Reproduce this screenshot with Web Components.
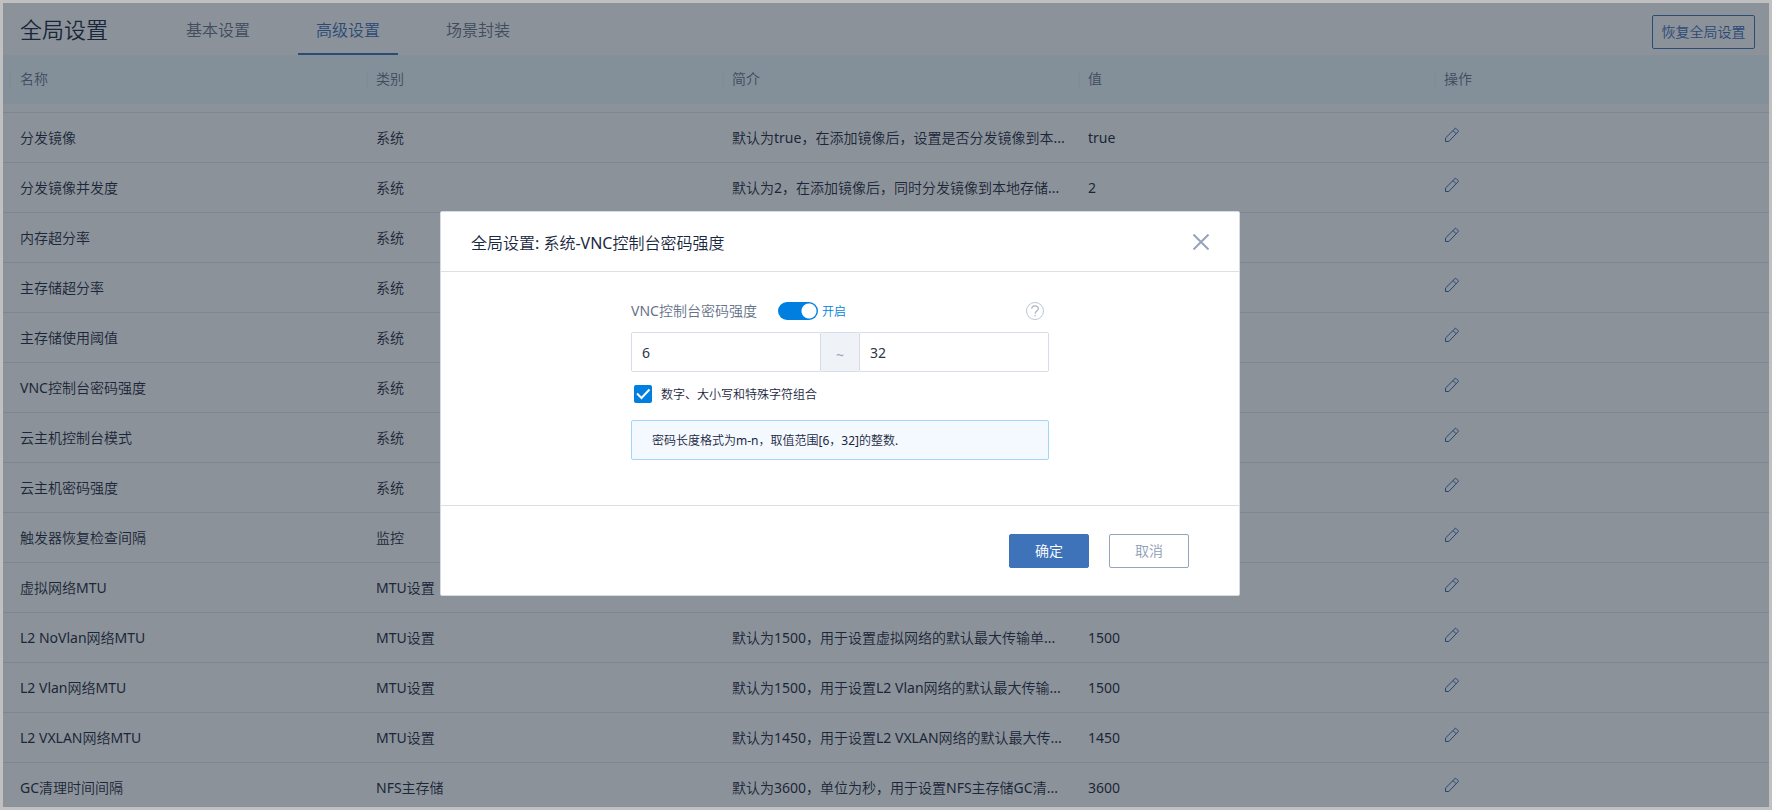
<!DOCTYPE html>
<html lang="zh-CN">
<head>
<meta charset="utf-8">
<title>全局设置</title>
<style>
  body {
    margin: 0;
    background: #c0c0c0;
    font-family: "Noto Sans", "Noto Sans CJK SC DemiLight", "Noto Sans CJK SC", sans-serif;
    font-size: 14px;
    font-weight: 400;
    line-height: 20px;
    color: #1a2740;
  }
</style>
</head>
<body>
<settings-page>
  <page-header slot="header" heading="全局设置">
    <nav-tab>基本设置</nav-tab>
    <nav-tab active>高级设置</nav-tab>
    <nav-tab>场景封装</nav-tab>
    <ui-button slot="action" kind="outline">恢复全局设置</ui-button>
  </page-header>
  <settings-table></settings-table>
  <modal-dialog slot="modal" heading="全局设置: 系统-VNC控制台密码强度">
    <password-form></password-form>
    <ui-button slot="footer" kind="primary">确定</ui-button>
    <ui-button slot="footer" kind="muted">取消</ui-button>
  </modal-dialog>
</settings-page>

<script>
class BaseElement extends HTMLElement {
  connectedCallback() {
    if (!this.shadowRoot) this.attachShadow({ mode: 'open' }).innerHTML = this.render();
  }
}

customElements.define('settings-page', class extends BaseElement {
  render() {
    return `<style>
      :host { display: flex; flex-direction: column; position: relative; box-sizing: border-box;
        height: 100vh; border: 3px solid #c0c0c0; background: #fff; overflow: hidden; }
      main { flex: 1; min-height: 0; overflow: hidden; }
      .mask { position: absolute; inset: 0; background: rgba(25, 37, 51, .5);
        display: flex; justify-content: center; align-items: flex-start;
        padding: 208px 92px 0 0; }
    </style>
    <slot name="header"></slot>
    <main><slot></slot></main>
    <div class="mask"><slot name="modal"></slot></div>`;
  }
});

customElements.define('page-header', class extends BaseElement {
  render() {
    return `<style>
      :host { display: flex; align-items: center; flex: none; height: 52px; padding: 0 14px 0 17px; }
      h1 { margin: 0; width: 148px; font-size: 22px; line-height: 32px; font-weight: inherit; }
      nav { display: flex; gap: 30px; flex: 1; }
      .action { padding-top: 6px; }
    </style>
    <h1>${this.getAttribute('heading')}</h1>
    <nav><slot></slot></nav>
    <div class="action"><slot name="action"></slot></div>`;
  }
});

customElements.define('nav-tab', class extends BaseElement {
  render() {
    return `<style>
      :host { display: block; width: 100px; }
      a { display: block; box-sizing: border-box; height: 52px; padding-top: 4px; line-height: 46px; text-align: center;
        font-size: 16px; color: #66728a; text-decoration: none; border-bottom: 2px solid transparent; }
      :host([active]) a { color: #3a6eb7; border-color: #3e73ba; }
    </style>
    <a href="#"><slot></slot></a>`;
  }
});

customElements.define('ui-button', class extends BaseElement {
  render() {
    return `<style>
      :host { display: block; }
      button { display: block; box-sizing: border-box; height: 34px; min-width: 80px; padding: 0 8px; border: 1px solid;
        border-radius: 2px; font: inherit; line-height: 20px; background: #fff; cursor: pointer; }
      :host([kind=outline]) button { min-width: 103px; color: #3a6eb7; border-color: #3e73ba; }
      :host([kind=primary]) button { color: #fff; background: #3e73ba; border-color: #3e73ba; }
      :host([kind=muted]) button { color: #8f9db4; border-color: #96a4ba; }
    </style>
    <button type="button"><slot></slot></button>`;
  }
});

customElements.define('edit-button', class extends BaseElement {
  render() {
    return `<style>
      :host { display: block; }
      button { display: block; padding: 0; border: 0; background: none; cursor: pointer; }
      svg { display: block; width: 16px; height: 16px; fill: none; stroke: #3068b4; stroke-width: 1;
        stroke-linejoin: round; }
    </style>
    <button type="button" aria-label="编辑"><svg viewBox="0 0 16 16">
      <path d="M1.500 14.500V11L11 1.600q.6-.5 1.200 0l1.900 1.900q.6.600 0 1.200L4.800 14.500zM9 3.600l3.100 3.100"/>
    </svg></button>`;
  }
});

const ROWS = [
  ['分发镜像', '系统', '默认为true，在添加镜像后，设置是否分发镜像到本...', 'true'],
  ['分发镜像并发度', '系统', '默认为2，在添加镜像后，同时分发镜像到本地存储...', '2'],
  ['内存超分率', '系统', '', ''],
  ['主存储超分率', '系统', '', ''],
  ['主存储使用阈值', '系统', '', ''],
  ['VNC控制台密码强度', '系统', '', ''],
  ['云主机控制台模式', '系统', '', ''],
  ['云主机密码强度', '系统', '', ''],
  ['触发器恢复检查间隔', '监控', '', ''],
  ['虚拟网络MTU', 'MTU设置', '', ''],
  ['L2 NoVlan网络MTU', 'MTU设置', '默认为1500，用于设置虚拟网络的默认最大传输单...', '1500'],
  ['L2 Vlan网络MTU', 'MTU设置', '默认为1500，用于设置L2 Vlan网络的默认最大传输...', '1500'],
  ['L2 VXLAN网络MTU', 'MTU设置', '默认为1450，用于设置L2 VXLAN网络的默认最大传...', '1450'],
  ['GC清理时间间隔', 'NFS主存储', '默认为3600，单位为秒，用于设置NFS主存储GC清...', '3600'],
];

customElements.define('settings-table', class extends BaseElement {
  render() {
    const body = ROWS.map(r =>
      `<tr>${r.map(c => `<td>${c}</td>`).join('')}<td><edit-button></edit-button></td></tr>`).join('');
    return `<style>
      :host { display: block; overflow: hidden; }
      table { width: calc(100% + 21px); table-layout: fixed; border-collapse: separate; border-spacing: 0; }
      .first { width: 363px; }
      th, td { box-sizing: border-box; padding: 0 10px; text-align: left; font-weight: inherit;
        white-space: nowrap; overflow: hidden; }
      th:first-child, td:first-child { padding-left: 17px; }
      th { height: 49px; padding-bottom: 2px; color: #66728a; background: #effbff;
        background-image: linear-gradient(#e9f4f9, #e9f4f9); background-repeat: no-repeat;
        background-size: 2px 18px; background-position: 0 16px; }
      th:first-child { background-position: 6px 16px; }
      td { height: 50px; padding-top: 1px; border-bottom: 1px solid #e2e7ee; }
      td:last-child { padding-bottom: 6px; }
      .edge td { height: 9px; padding: 0; }
    </style>
    <table>
      <colgroup><col class="first"><col><col><col><col></colgroup>
      <thead><tr><th>名称</th><th>类别</th><th>简介</th><th>值</th><th>操作</th></tr></thead>
      <tbody><tr class="edge"><td colspan="5"></td></tr>${body}</tbody>
    </table>`;
  }
});

customElements.define('modal-dialog', class extends BaseElement {
  render() {
    return `<style>
      :host { display: block; box-sizing: border-box; width: 800px; max-width: 100%;
        background: #fff; border: 1px solid #d5dbe5; border-radius: 2px; }
      header { display: flex; justify-content: space-between; align-items: center;
        height: 59px; padding: 0 30px; border-bottom: 1px solid #dbdfe6; }
      h2 { margin: 0; padding-top: 2px; font-size: 16px; line-height: 24px; font-weight: inherit; }
      header button { padding: 0; border: 0; background: none; cursor: pointer; }
      svg { display: block; width: 16px; height: 16px; stroke: #96a4ba; stroke-width: 2; fill: none; }
      .body { height: 233px; display: flex; justify-content: center; border-bottom: 1px solid #dbdfe6; }
      footer { display: flex; justify-content: flex-end; gap: 20px; padding: 28px 50px 27px; }
    </style>
    <div role="dialog" aria-labelledby="title">
      <header>
        <h2 id="title">${this.getAttribute('heading')}</h2>
        <button type="button" aria-label="关闭"><svg viewBox="0 0 16 16"><path d="M.5.5l15 15M15.500.5l-15 15"/></svg></button>
      </header>
      <div class="body"><slot></slot></div>
      <footer><slot name="footer"></slot></footer>
    </div>`;
  }
});

customElements.define('help-icon', class extends BaseElement {
  render() {
    return `<style>
      :host { display: block; }
      button { display: block; padding: 0; border: 0; background: none; cursor: help; }
      svg { display: block; width: 18px; height: 18px; fill: none; stroke: #b9c7d6; }
    </style>
    <button type="button" aria-label="帮助"><svg viewBox="0 0 18 18">
      <circle cx="9" cy="9" r="8.500"/>
      <path d="M5.800 6.800C5.800 3 12.300 3 12.300 6.500c0 2.500-3.200 2.500-3.200 5.200M9.100 13v1.500" stroke="#a9b3c2" stroke-width="1.200"/>
    </svg></button>`;
  }
});

customElements.define('password-form', class extends BaseElement {
  render() {
    return `<style>
      :host { display: block; width: 418px; padding-top: 29px; }
      input { margin: 0; box-sizing: border-box; }
      .top { display: flex; align-items: center; height: 20px; padding-right: 5px; }
      .name { color: #66728a; width: 147px; }
      .state { flex: 1; margin-left: 4px; font-size: 12px; color: #007fe0; padding-top: 2px; }
      .switch { appearance: none; width: 40px; height: 18px; border-radius: 9px; cursor: pointer;
        background: radial-gradient(circle at 31px 9px, #fff 7px, #007fe0 8px); }
      .range { display: flex; height: 40px; margin-top: 11px; }
      .range input { flex: 1; min-width: 0; padding: 2px 10px 0; border: 1px solid #d7dce6; border-radius: 2px;
        font: inherit; color: #2b3547; background: #fff; }
      .range span { box-sizing: border-box; width: 38px; line-height: 44px; text-align: center; font-size: 14px;
        color: #96a4ba; background: #eff3f7; border: solid #d7dce6; border-width: 1px 0; overflow: hidden; }
      .option { display: flex; align-items: center; gap: 9px; margin: 13px 0 17px 3px; height: 18px;
        font-size: 12px; }
      .option label { padding-top: 2px; }
      .box { display: grid; }
      .box > * { grid-area: 1 / 1; width: 18px; height: 18px; }
      .box input { appearance: none; border-radius: 2px; background: #007fe0; cursor: pointer; }
      .box svg { pointer-events: none; fill: none; stroke: #fff; stroke-width: 2; }
      .hint { box-sizing: border-box; height: 40px; line-height: 40px; margin: 0; padding: 0 20px; font-size: 12px;
        background: #f4f9ff; border: 1px solid #a3d6fb; border-radius: 2px; }
    </style>
    <div class="top">
      <label class="name" for="enable">VNC控制台密码强度</label>
      <input class="switch" id="enable" type="checkbox" role="switch" checked>
      <span class="state">开启</span>
      <help-icon></help-icon>
    </div>
    <div class="range">
      <input type="text" value="6" aria-label="最小长度"><span>~</span><input type="text" value="32" aria-label="最大长度">
    </div>
    <div class="option">
      <span class="box"><input id="combo" type="checkbox" checked><svg viewBox="0 0 18 18"><path d="M3 8.500l4.500 4.500L15.500 4.500"/></svg></span>
      <label for="combo">数字、大小写和特殊字符组合</label>
    </div>
    <p class="hint">密码长度格式为m-n，取值范围[6，32]的整数.</p>`;
  }
});
</script>
</body>
</html>
